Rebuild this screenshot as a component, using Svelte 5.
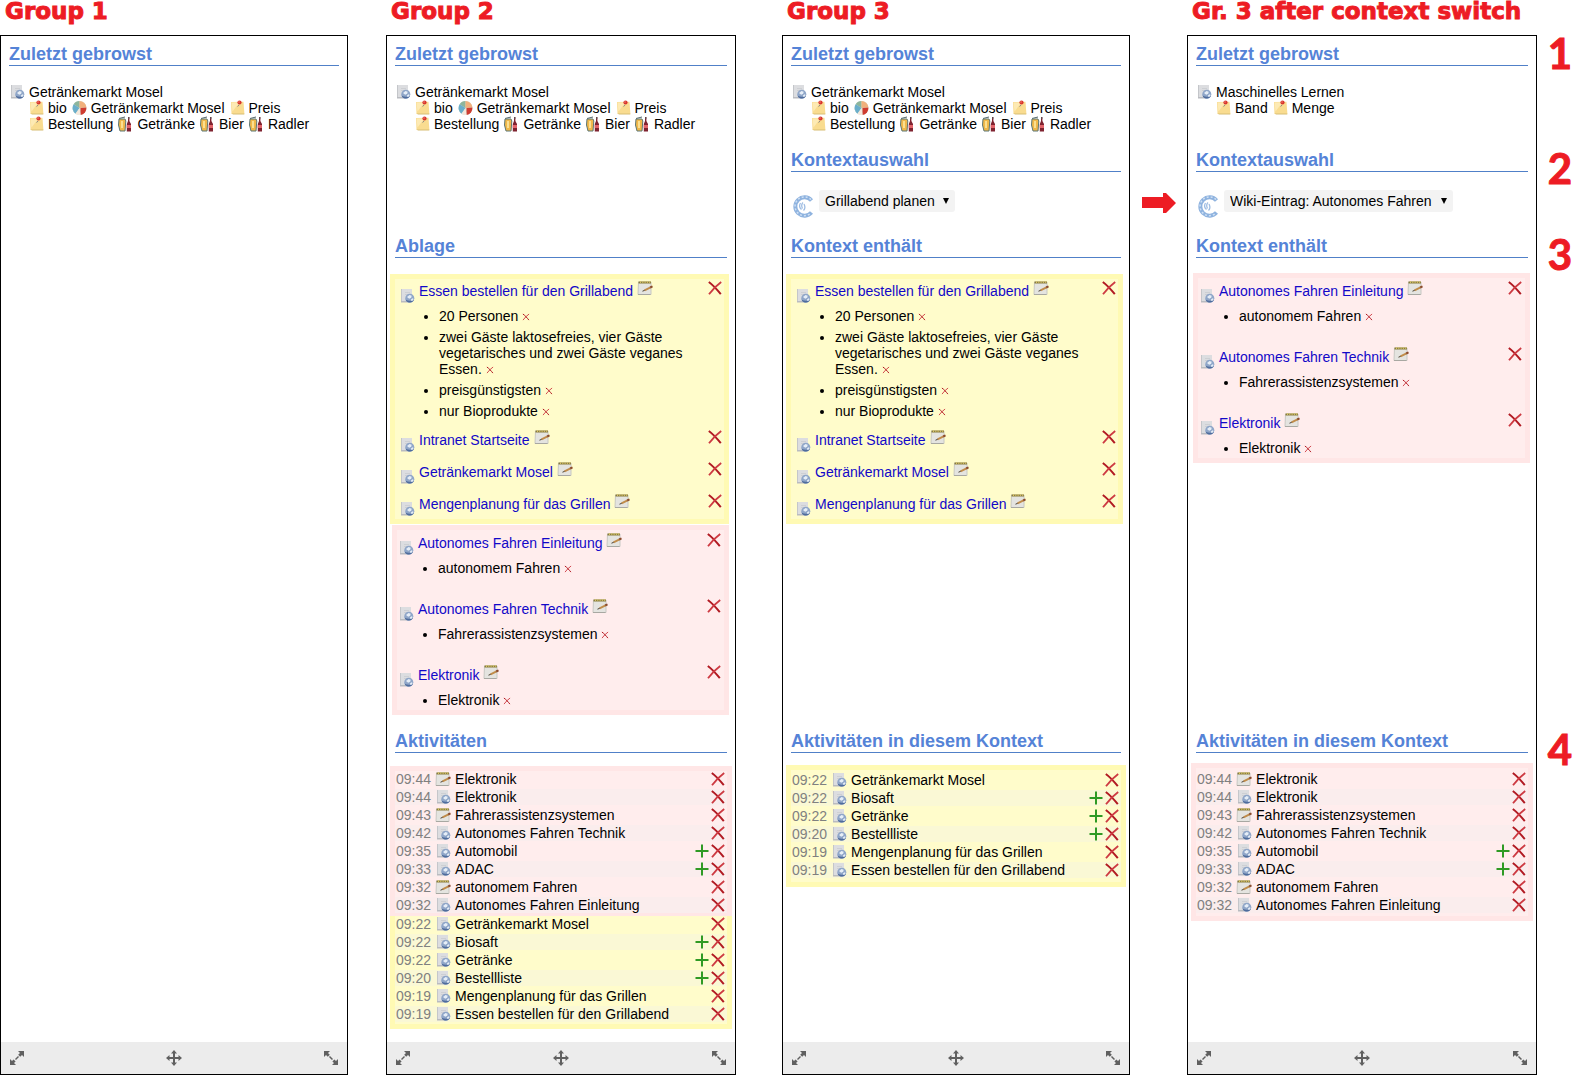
<script lang="ts">
	type Tone = 'pink' | 'yellow';

	interface Note {
		title: string;
		details: string[];
	}

	interface Activity {
		time: string;
		icon: 'page' | 'memo';
		title: string;
		addable?: boolean;
	}

	interface Group<T> {
		tone: Tone;
		items: T[];
	}

	interface Panel {
		name: string;
		recent: { title: string; tags: { icon: 'note' | 'pie' | 'drinks'; label: string }[] };
		context?: string;
		notesTitle?: string;
		notes?: Group<Note>[];
		activitiesTitle?: string;
		activities?: Group<Activity>[];
	}

	const mosel: Panel['recent'] = {
		title: 'Getränkemarkt Mosel',
		tags: [
			{ icon: 'note', label: 'bio' },
			{ icon: 'pie', label: 'Getränkemarkt Mosel' },
			{ icon: 'note', label: 'Preis' },
			{ icon: 'note', label: 'Bestellung' },
			{ icon: 'drinks', label: 'Getränke' },
			{ icon: 'drinks', label: 'Bier' },
			{ icon: 'drinks', label: 'Radler' }
		]
	};

	const grillNotes: Group<Note> = {
		tone: 'yellow',
		items: [
			{
				title: 'Essen bestellen für den Grillabend',
				details: [
					'20 Personen',
					'zwei Gäste laktosefreies, vier Gäste vegetarisches und zwei Gäste veganes Essen.',
					'preisgünstigsten',
					'nur Bioprodukte'
				]
			},
			{ title: 'Intranet Startseite', details: [] },
			{ title: 'Getränkemarkt Mosel', details: [] },
			{ title: 'Mengenplanung für das Grillen', details: [] }
		]
	};

	const drivingNotes: Group<Note> = {
		tone: 'pink',
		items: [
			{ title: 'Autonomes Fahren Einleitung', details: ['autonomem Fahren'] },
			{ title: 'Autonomes Fahren Technik', details: ['Fahrerassistenzsystemen'] },
			{ title: 'Elektronik', details: ['Elektronik'] }
		]
	};

	const drivingActivities: Group<Activity> = {
		tone: 'pink',
		items: [
			{ time: '09:44', icon: 'memo', title: 'Elektronik' },
			{ time: '09:44', icon: 'page', title: 'Elektronik' },
			{ time: '09:43', icon: 'memo', title: 'Fahrerassistenzsystemen' },
			{ time: '09:42', icon: 'page', title: 'Autonomes Fahren Technik' },
			{ time: '09:35', icon: 'page', title: 'Automobil', addable: true },
			{ time: '09:33', icon: 'page', title: 'ADAC', addable: true },
			{ time: '09:32', icon: 'memo', title: 'autonomem Fahren' },
			{ time: '09:32', icon: 'page', title: 'Autonomes Fahren Einleitung' }
		]
	};

	const grillActivities: Group<Activity> = {
		tone: 'yellow',
		items: [
			{ time: '09:22', icon: 'page', title: 'Getränkemarkt Mosel' },
			{ time: '09:22', icon: 'page', title: 'Biosaft', addable: true },
			{ time: '09:22', icon: 'page', title: 'Getränke', addable: true },
			{ time: '09:20', icon: 'page', title: 'Bestellliste', addable: true },
			{ time: '09:19', icon: 'page', title: 'Mengenplanung für das Grillen' },
			{ time: '09:19', icon: 'page', title: 'Essen bestellen für den Grillabend' }
		]
	};

	const panels: Panel[] = [
		{ name: 'Group 1', recent: mosel },
		{
			name: 'Group 2',
			recent: mosel,
			notesTitle: 'Ablage',
			notes: [grillNotes, drivingNotes],
			activitiesTitle: 'Aktivitäten',
			activities: [drivingActivities, grillActivities]
		},
		{
			name: 'Group 3',
			recent: mosel,
			context: 'Grillabend planen',
			notesTitle: 'Kontext enthält',
			notes: [grillNotes],
			activitiesTitle: 'Aktivitäten in diesem Kontext',
			activities: [grillActivities]
		},
		{
			name: 'Gr. 3 after context switch',
			recent: {
				title: 'Maschinelles Lernen',
				tags: [
					{ icon: 'note', label: 'Band' },
					{ icon: 'note', label: 'Menge' }
				]
			},
			context: 'Wiki-Eintrag: Autonomes Fahren',
			notesTitle: 'Kontext enthält',
			notes: [drivingNotes],
			activitiesTitle: 'Aktivitäten in diesem Kontext',
			activities: [drivingActivities]
		}
	];
</script>

{#snippet icon(name: string)}
	<svg class="icon" viewBox="0 0 16 16" aria-hidden="true">
		{#if name === 'page'}
			<path d="M2 1h11v13H2z" fill="#dcdde0" />
			<path d="M2 1h1v13H2z" fill="#c4c6ca" />
			<path d="M2 13h8v1.500H2z" fill="#b9bbc0" />
			<path d="M6 4.500h5M6 6.500h3" stroke="#cdcfd3" />
			<circle cx="10.800" cy="10.300" r="4.500" fill="#8fa6c8" />
			<path d="M6.500 11.500a4.500 4.500 0 0 0 8.500 0c-2 1.500-5.500 1.800-8.500 0z" fill="#4f6c9c" />
			<path d="M8 9l2.500-2 2.200.7-.5 2-2 1.100zM12 11.500l1.500-1.200 1.200.6-1.400 2-1.300-.4z" fill="#e6eef7" />
		{:else if name === 'note'}
			<path d="M2 2l12.500-.2.900 12.200H2.500z" fill="#f9dc90" />
			<path d="M2.500 2.500l8-.2L3.500 11.500z" fill="#fdeab4" />
			<path d="M2.500 13.500h12.800v1H4z" fill="#d8bd74" />
			<path d="M10 5l-1.400 1.600" stroke="#8a8a8a" />
			<circle cx="10.500" cy="2.500" r="2.100" fill="#d8352d" />
			<circle cx="10" cy="2" r=".7" fill="#f39388" />
		{:else if name === 'pie'}
			<circle cx="8.500" cy="8" r="7" fill="#d7e2d2" />
			<path d="M8.500 8L2.700 4.200A7 7 0 0 1 8.500 1z" fill="#8db59c" />
			<path d="M8.500 8V1a7 7 0 0 1 6.900 6.200z" fill="#f1b07c" />
			<path d="M8.500 8L2.700 4.200A7 7 0 0 0 4.500 13.700z" fill="#6aaecb" />
			<path d="M9.500 8l5.900-.5A7 7 0 0 1 9.500 15z" fill="#cf3b30" />
			<path d="M8.500 8l1 7a7 7 0 0 1-5-1.300z" fill="#f4e8dc" />
		{:else if name === 'drinks'}
			<path d="M2 2.500l6-1.500" stroke="#55666a" />
			<path d="M2 3h6l.8 2-.8 10H3L1.500 9z" fill="#f0b84a" stroke="#5c7675" />
			<path d="M4 5h2v7H4z" fill="#fbdf90" />
			<path d="M11 1h1.400v4l1.600 3v7.500H9.800V8L11 5z" fill="#7f2330" />
			<path d="M9.800 9H14v3H9.800z" fill="#e2646a" />
			<path d="M11 1.200h1.400v1.500H11z" fill="#565656" />
		{:else if name === 'memo'}
			<path d="M1.500 2h12.500v12.500h-13z" fill="#e4e4e0" stroke="#c8c8c3" />
			<path d="M1.500 1.500h12.500v2H1.500z" fill="#8a7d3c" />
			<path d="M3.500 1v2M5.800 1v2M8.100 1v2M10.400 1v2M12.700 1v2" stroke="#d3c169" />
			<path d="M1 14.500h12.500" stroke="#a8a8a2" />
			<path d="M7.500 10.300l6-3" stroke="#c08c4a" stroke-width="2" />
			<path d="M5.500 11.200l2.200-.9" stroke="#4b4032" />
			<path d="M13.200 7.500l2.300-1.200" stroke="#8b4a2b" stroke-width="2" />
		{:else if name === 'delete'}
			<path d="M1.800 2C6 5 10 9.500 13.800 14.200" stroke="#b11a22" stroke-width="2" fill="none" />
			<path d="M14.200 2C9.500 5.500 5.500 9.500 2 14.200" stroke="#cd3a42" stroke-width="1.800" fill="none" />
		{:else if name === 'add'}
			<path d="M8 1.500v13M1.500 8h13" stroke="#2f9a24" stroke-width="2" />
		{:else if name === 'grow-right'}
			<path d="M9 1h6v6l-2-2-1.800 1.800-2-2L11 3z" fill="#606060" />
			<path d="M7 15H1V9l2 2 1.600-1.600 2 2L5 13z" fill="#606060" />
			<path d="M6.500 9.500l3-3" stroke="#606060" stroke-width="1.500" />
		{:else if name === 'grow-left'}
			<path d="M7 1H1v6l2-2 1.800 1.800 2-2L5 3z" fill="#606060" />
			<path d="M9 15h6V9l-2 2-1.600-1.600-2 2L11 13z" fill="#606060" />
			<path d="M6.500 6.500l3 3" stroke="#606060" stroke-width="1.500" />
		{:else if name === 'move'}
			<path d="M8 2v12M2 8h12" stroke="#606060" stroke-width="2" />
			<path
				d="M8 0l3 3.500H5zM8 16l3-3.500H5zM0 8l3.500-3v6zM16 8l-3.500-3v6z"
				fill="#606060"
			/>
		{/if}
	</svg>
{/snippet}

<main class="board">
	{#each panels as panel, i}
		<h1 class="name col-{i + 1}">{panel.name}</h1>
		<article class="panel col-{i + 1}">
			<section class="recent">
				<h2>Zuletzt gebrowst</h2>
				<p class="page">{@render icon('page')}{panel.recent.title}</p>
				<ul class="tags">
					{#each panel.recent.tags as tag}
						<li>{@render icon(tag.icon)}{tag.label}</li>
					{/each}
				</ul>
			</section>

			<section class="context">
				{#if panel.context}
					<h2 id="context-{i}">Kontextauswahl</h2>
					<div class="picker">
						<svg class="logo" viewBox="0 0 24 24" aria-hidden="true">
							<path
								d="M20.500 6.500A9.200 9.200 0 1 0 20.500 18.500"
								fill="none"
								stroke="#8fb3df"
								stroke-width="4"
							/>
							<path
								d="M20 5.500A9.400 9.400 0 1 0 20 19"
								fill="none"
								stroke="#cfe0f4"
								stroke-width="1.500"
								stroke-dasharray="2 2"
							/>
							<path
								d="M9.500 9c-1.500 2.500-.8 5 1 6.500M12 8.500c-2 2-1.500 4-.5 6M12.500 16.500c2-2 1.500-4.500.5-6.500"
								fill="none"
								stroke="#9fbde3"
								stroke-width="1.300"
							/>
						</svg>
						<div class="select">
							<select aria-labelledby="context-{i}">
								<option>{panel.context}</option>
							</select>
							<svg viewBox="0 0 6 6" aria-hidden="true"><path d="M0 0h6L3 6z" /></svg>
						</div>
					</div>
				{/if}
			</section>

			<section class="notes">
				{#if panel.notes}
					<h2>{panel.notesTitle}</h2>
					{#each panel.notes as group}
						<div class="box {group.tone}">
							{#each group.items as note}
								<div class="note">
									<div class="note-head">
										{@render icon('page')}
										<a href="#note">{note.title}</a>
										<button aria-label="Bearbeiten">{@render icon('memo')}</button>
										<button class="remove" aria-label="Entfernen">{@render icon('delete')}</button>
									</div>
									{#if note.details.length}
										<ul class="details">
											{#each note.details as detail}
												<li>
													{detail}
													<button class="small" aria-label="Entfernen">{@render icon('delete')}</button>
												</li>
											{/each}
										</ul>
									{/if}
								</div>
							{/each}
						</div>
					{/each}
				{/if}
			</section>

			<section class="activities">
				{#if panel.activities}
					<h2>{panel.activitiesTitle}</h2>
					<div class="groups" class:stacked={panel.activities.length > 1}>
						{#each panel.activities as group}
							<ul class="box {group.tone}">
								{#each group.items as activity}
									<li>
										<time>{activity.time}</time>
										{@render icon(activity.icon)}
										<span class="label">{activity.title}</span>
										<span class="actions">
											{#if activity.addable}
												<button aria-label="Hinzufügen">{@render icon('add')}</button>
											{/if}
											<button aria-label="Entfernen">{@render icon('delete')}</button>
										</span>
									</li>
								{/each}
							</ul>
						{/each}
					</div>
				{/if}
			</section>

			<footer>
				<button aria-label="Nach rechts vergrößern">{@render icon('grow-right')}</button>
				<button aria-label="Verschieben">{@render icon('move')}</button>
				<button aria-label="Nach links vergrößern">{@render icon('grow-left')}</button>
			</footer>
		</article>
	{/each}

	<svg class="arrow" viewBox="0 0 34 20" aria-hidden="true">
		<path d="M0 4h21V0h3l10 10-10 10h-3v-5H0z" fill="#ed1c24" />
	</svg>

	{#each [1, 2, 3, 4] as n}
		<span class="number row-{n}">{n}</span>
	{/each}
</main>

<style>
	:global(body) {
		margin: 0;
		background: #fff;
	}

	.board {
		display: grid;
		grid-template-columns:
			minmax(0, 348fr) 38fr minmax(0, 350fr) 46fr
			minmax(0, 348fr) 57fr minmax(0, 350fr) 46fr;
		grid-template-rows: 35px auto auto auto 1fr auto;
		min-height: 100vh;
		font: 14px/16px 'Liberation Sans', Arial, sans-serif;
		color: #000;
	}

	h1,
	h2,
	p,
	ul {
		margin: 0;
		padding: 0;
	}

	button {
		flex: none;
		display: block;
		padding: 0;
		border: 0;
		background: none;
		cursor: pointer;
	}

	.icon {
		flex: none;
		display: block;
		width: 16px;
		height: 16px;
	}

	.col-1 {
		grid-column: 1;
	}

	.col-2 {
		grid-column: 3;
	}

	.col-3 {
		grid-column: 5;
	}

	.col-4 {
		grid-column: 7;
	}

	.name {
		grid-row: 1;
		padding-left: 5px;
		font: 700 23px/22px 'Arial Black', 'DejaVu Sans', sans-serif;
		color: #ed1c24;
		white-space: nowrap;
		-webkit-text-stroke: 1px #ed1c24;
	}

	/* sections line up across all panels */
	.panel {
		grid-row: 2 / -1;
		display: grid;
		grid-template-rows: subgrid;
		border: 1px solid #000;
	}

	section {
		padding: 0 8px 18px;
	}

	h2 {
		padding-bottom: 1px;
		border-bottom: 1px solid #5080c8;
		font-size: 18px;
		line-height: 20px;
		color: #5583d7;
	}

	.recent {
		padding-top: 8px;
	}

	.page {
		display: flex;
		gap: 4px;
		margin-top: 18px;
	}

	.tags {
		display: flex;
		flex-wrap: wrap;
		column-gap: 4px;
		padding-left: 19px;
		list-style: none;
	}

	.tags li {
		display: flex;
		gap: 4px;
	}

	.picker {
		display: flex;
		align-items: flex-start;
		gap: 4px;
		margin-top: 18px;
	}

	.logo {
		width: 24px;
		height: 24px;
		margin-top: 4px;
	}

	.select {
		position: relative;
	}

	.select select {
		display: block;
		height: 22px;
		padding: 0 20px 0 6px;
		border: 0;
		border-radius: 3px;
		background: #f3f3f3;
		font: inherit;
		color: inherit;
		appearance: none;
	}

	.select svg {
		position: absolute;
		top: 8px;
		right: 6px;
		width: 6px;
		height: 6px;
		pointer-events: none;
	}

	.box {
		border: 5px solid;
	}

	.pink {
		border-color: #ffe6e6;
		background: #ffeded;
	}

	.yellow {
		border-color: #fffab4;
		background: #fffccb;
	}

	.notes {
		padding-bottom: 16px;
	}

	.notes .box {
		display: flex;
		flex-direction: column;
		margin: 16px -2px 0 -5px;
		padding: 1px 1px 2px 4px;
		gap: 8px;
	}

	.notes .pink {
		margin: 15px -2px 0 -3px;
		padding: 2px 2px 0 1px;
		gap: 20px;
	}

	.notes .yellow + .pink {
		margin-top: 1px;
	}

	.note-head {
		display: flex;
		align-items: flex-start;
		gap: 4px;
		min-height: 24px;
	}

	.note-head > .icon {
		align-self: flex-end;
	}

	.note-head a {
		line-height: 22px;
		color: #1208c8;
		text-decoration: none;
	}

	.remove {
		margin-left: auto;
	}

	.details {
		display: flex;
		flex-direction: column;
		gap: 5px;
		margin: 4px 0 2px;
		padding-left: 40px;
	}

	.small {
		display: inline-block;
	}

	.small .icon {
		width: 8px;
		height: 8px;
	}

	.activities {
		padding-bottom: 13px;
	}

	.groups {
		margin: 10px -5px 0;
	}

	.groups .box {
		display: flex;
		flex-direction: column;
		gap: 2px;
		padding: 3px 0;
		list-style: none;
	}

	.groups .yellow {
		margin-top: 12px;
		padding: 2px 0 4px;
	}

	.groups li {
		display: flex;
		gap: 4px;
		padding: 0 1px;
	}

	.groups li:nth-child(even) {
		background: rgb(240 240 240 / 0.3);
	}

	.groups time {
		color: #808080;
	}

	.label {
		flex: 1;
	}

	.actions {
		display: flex;
	}

	.stacked {
		margin-top: 13px;
	}

	.stacked .pink {
		padding: 0;
		border-bottom-width: 3px;
	}

	.stacked .yellow {
		margin: 0;
		padding: 0 0 2px;
		border-top: 0;
	}

	footer {
		display: flex;
		align-items: center;
		justify-content: space-between;
		height: 32px;
		padding: 0 8px;
		background: #ececec;
	}

	.arrow {
		grid-area: 3 / 6;
		justify-self: center;
		width: 34px;
		height: 20px;
		margin-top: 43px;
	}

	.number {
		grid-column: 8;
		justify-self: center;
		font: 700 42px/36px Lato, Calibri, sans-serif;
		color: #ed1c24;
		-webkit-text-stroke: 1px #ed1c24;
	}

	.row-1 {
		grid-row: 2;
	}

	.row-2 {
		grid-row: 3;
	}

	.row-3 {
		grid-row: 4;
	}

	.row-4 {
		grid-row: 5;
	}
</style>
